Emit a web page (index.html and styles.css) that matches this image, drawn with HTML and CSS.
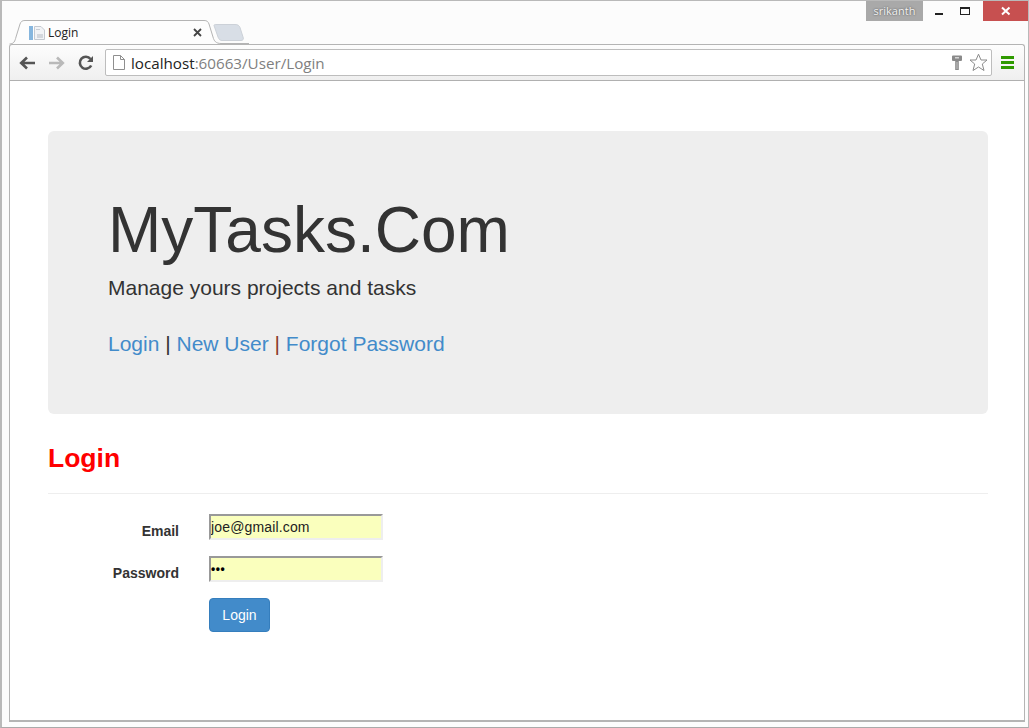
FILE: index.html
```html
<!DOCTYPE html>
<html lang="en">
<head>
<meta charset="utf-8">
<title>Login</title>
<link rel="stylesheet" href="styles.css">
</head>
<body>
<div class="frame">
  <div class="titlebar">
    <span class="user">srikanth</span>
    <div class="controls">
      <span class="ctl"><svg width="10" height="10" viewBox="0 0 10 10"><rect x="1" y="7" width="8" height="2" fill="#222"/></svg></span>
      <span class="ctl"><svg width="12" height="10" viewBox="0 0 12 10"><rect x="1.5" y="1.5" width="9" height="7" fill="none" stroke="#222"/><rect x="1" y="1" width="10" height="2" fill="#222"/></svg></span>
      <span class="ctl close"><svg width="10" height="10" viewBox="0 0 10 10"><path d="M1 1.5 8.5 8.5M8.5 1.5 1 8.5" stroke="#fff" stroke-width="2"/></svg></span>
    </div>
  </div>
  <div class="tabstrip">
    <svg class="tabshape" width="240" height="25" viewBox="0 0 240 25">
      <path d="M0.500 24 C5 24 6 21 7 17 L11 4 C12 1.500 13 0.500 16 0.500 L195 0.500 C198 0.500 199 1.500 200 4 L204 17 C205 21 207 23.500 212 23.500 L240 23.500" fill="#fdfdfd" stroke="#b4b4b4"/>
      <path d="M205 5.500 C205 4.500 206 4.500 207 4.500 L226 4.500 C229 4.500 230 5.500 231 7.500 L234 17 C235 19 234 20.500 232 20.500 L213 20.500 C211 20.500 210 19.500 209 17 Z" fill="#d8dee6" stroke="#ccd1d8"/>
    </svg>
    <div class="tab">
      <svg class="favicon" width="16" height="16" viewBox="0 0 16 16">
        <rect x="0" y="1" width="4" height="14" fill="#86b6de"/>
        <path d="M5.500 1.500H12L15.500 5V14.500H5.500Z" fill="#f1f3f6" stroke="#c4c9d0"/>
        <rect x="7" y="4" width="4" height="1" fill="#c9ced6"/>
        <rect x="8" y="9" width="6" height="4" fill="#d3d7dd"/>
      </svg>
      <span class="tabtitle">Login</span>
      <svg class="tabclose" width="9" height="9" viewBox="0 0 9 9"><path d="M1 1 8 8M8 1 1 8" stroke="#444" stroke-width="1.800"/></svg>
    </div>
  </div>
  <div class="toolbar">
    <svg class="navicon" width="18" height="16" viewBox="0 0 18 16"><path d="M17 8H4M9 2.500 3.200 8 9 13.500" fill="none" stroke="#555" stroke-width="2.600"/></svg>
    <svg class="navicon" width="18" height="16" viewBox="0 0 18 16"><path d="M2 8H15M10 2.500 15.800 8 10 13.500" fill="none" stroke="#b9b9b9" stroke-width="2.600"/></svg>
    <svg class="navicon" width="18" height="16" viewBox="0 0 18 16"><path d="M15.200 10.500A6 6 0 1 1 14.500 4" fill="none" stroke="#555" stroke-width="2.600"/><path d="M11 7H17V1Z" fill="#555"/></svg>
    <div class="omnibox">
      <svg class="pageicon" width="12" height="15" viewBox="0 0 12 15"><path d="M.5 .5H7.500L11.500 4.500V14.500H.5ZM7.500 .5V4.500H11.500" fill="#fff" stroke="#8f8f8f"/></svg>
      <span class="url"><span class="host">localhost</span>:60663/User/Login</span>
      <svg width="10" height="16" viewBox="0 0 10 16"><path d="M0 1.500Q0 .5 1 .5H9Q10 .5 10 1.500V5Q10 6 9 6H6.800V15H3.200V6H1Q0 6 0 5Z" fill="#8a8a8a"/><rect x="3" y="2" width="4" height="1.500" fill="#d4d4d4"/><rect x="4.500" y="7" width="1" height="7" fill="#c4c4c4"/></svg>
      <svg class="star" width="19" height="19" viewBox="0 0 19 19"><path d="M9.500 1.200 12 7H18L13.300 11 15 17.500 9.500 14 4 17.500 5.700 11 1 7H7Z" fill="#fff" stroke="#8b8b8b"/></svg>
    </div>
    <svg class="menu" width="13" height="14" viewBox="0 0 13 14"><g fill="#2f9a00"><rect y="0" width="13" height="3"/><rect y="5" width="13" height="3"/><rect y="10" width="13" height="3"/></g></svg>
  </div>
  <main class="page">
    <section class="jumbotron">
      <h1>MyTasks.Com</h1>
      <p class="lead">Manage yours projects and tasks</p>
      <p class="links"><a href="#">Login</a> | <a href="#">New User</a> <span class="red">|</span> <a href="#">Forgot Password</a></p>
    </section>
    <h2>Login</h2>
    <hr>
    <form class="form">
      <label class="lbl" for="email">Email</label>
      <input id="email" class="field" type="text" value="joe@gmail.com">
      <label class="lbl" for="pw">Password</label>
      <input id="pw" class="field pw" type="text" value="•••">
      <span></span>
      <button class="btn" type="button">Login</button>
    </form>
  </main>
</div>
</body>
</html>
```
FILE: styles.css
```css
* { box-sizing: border-box; }
html, body { margin: 0; padding: 0; background: #fff; }
body { font-family: "Liberation Sans", Arial, sans-serif; color: #333; overflow: hidden; }
.frame {
  width: 1029px; height: 728px; display: flex; flex-direction: column;
  border: 1px solid #b9b9b9; border-left-width: 2px; border-bottom-color: #aaa;
  background: #fcfcfc; padding: 0 3px 5px 7px;
}
.titlebar { height: 19px; flex: none; display: flex; justify-content: flex-end; margin-right: -3px; }
.user {
  width: 57px; height: 20px; background: #a9a9a9; color: #f2f2f2; font-size: 11px;
  line-height: 20px; text-align: center; font-family: "Open Sans", sans-serif;
  text-shadow: 0 0 2px #444;
}
.controls { display: flex; margin-left: 3px; }
.ctl { width: 26px; height: 20px; display: flex; align-items: center; justify-content: center; }
.close { width: 45px; background: #c75050; margin-left: 5px; }
.tabstrip { height: 24px; flex: none; position: relative; }
.tabshape { position: absolute; left: 0; top: 0; }
.tab { position: relative; width: 193px; margin-left: 20px; height: 24px; display: flex; align-items: center; padding-top: 1px; }
.favicon { flex: none; margin-right: 3px; }
.tabtitle { font: 12px "Open Sans", sans-serif; color: #222; flex: 1; }
.tabclose { flex: none; margin-right: 20px; }
.toolbar {
  height: 37px; flex: none; display: flex; align-items: center; padding: 0 10px 0 8px;
  background: linear-gradient(#fdfdfd, #efefef); border: 1px solid #b4b4b4; border-top-color: #b4b4b4;
  border-bottom: 1px solid #b0b0b0; border-radius: 3px 3px 0 0;
}
.navicon { flex: none; margin-right: 11px; }
.omnibox {
  flex: 1; height: 27px; background: #fff; border: 1px solid #bdbdbd; border-radius: 2px;
  display: flex; align-items: center; padding: 0 3px 0 7px; margin-right: 9px;
}
.pageicon { flex: none; margin-right: 6px; }
.url { flex: 1; font: 15.200px "Open Sans", sans-serif; color: #808080; white-space: nowrap; }
.host { color: #222; }
.star { margin-left: 7px; }
.menu { flex: none; }
.page { flex: 1; background: #fff; border: 1px solid #b4b4b4; border-width: 0 1px 2px 1px; padding: 50px 36px 0 38px; }
.jumbotron { background: #eee; border-radius: 6px; height: 283px; padding: 48px 60px; }
h1 { margin: 17px 0 8px; font-size: 64px; font-weight: 400; line-height: 69px; color: #333; }
.lead { margin: 0 0 15px; font-size: 21px; line-height: 30px; font-weight: 200; color: #333; }
.links { margin: 0; padding-top: 11px; font-size: 21px; line-height: 30px; color: #333; }
.links a { color: #428bca; text-decoration: none; }
.red { color: #8a3a2a; }
h2 { margin: 26px 0 0; color: #f00; font-size: 26.500px; line-height: 36px; font-weight: 700; }
hr { margin: 17px 0 20px; border: 0; border-top: 1px solid #eee; }
.form { display: grid; grid-template-columns: 131px 174px; column-gap: 30px; row-gap: 15px; align-items: start; }
.lbl { text-align: right; font-weight: 700; font-size: 14px; line-height: 20px; padding-top: 7px; color: #333; }
.field {
  width: 174px; height: 26px; margin: 0; padding: 0; background: #faffbd; color: #222;
  font: 14px "Liberation Sans", Arial, sans-serif; letter-spacing: .15px; border: 2px solid; border-color: #999 #eee #eee #999;
  outline: 0;
}
.pw { color: #000; font-size: 12px; font-weight: 700; letter-spacing: .5px; }
.btn {
  width: 61px; height: 34px; background: #428bca; border: 1px solid #357ebd; border-radius: 4px;
  color: #fff; font: 14px "Liberation Sans", Arial, sans-serif; padding: 0;
}
```
